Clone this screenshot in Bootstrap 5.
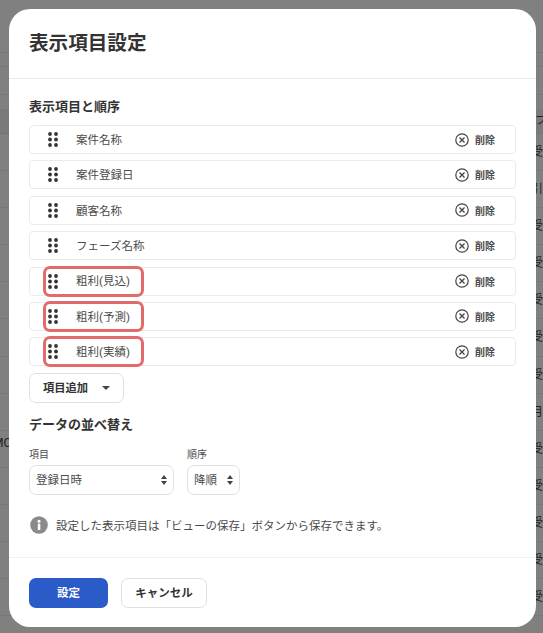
<!DOCTYPE html>
<html lang="ja"><head><meta charset="utf-8">
<link href="https://cdn.jsdelivr.net/npm/bootstrap@5.3.0/dist/css/bootstrap.min.css" rel="stylesheet">
<style>
html,body{height:633px;overflow:hidden;}
body{background:#808080;font-family:"Roboto","Noto Sans CJK JP",sans-serif;color:#333;}
.page-under{height:633px;overflow:hidden;}
.under-top{height:53px;border-bottom:1px solid #777;}
.under-a{height:14px;border-bottom:1px solid #777;}
.under-b{height:28px;border-bottom:1px solid #777;}
.under-band{height:39px;padding-top:14px;background:linear-gradient(#808080 14px,#7a7a7a 14px);border-bottom:1px solid #747474;padding-left:535px;font-size:11.5px;line-height:22px;color:#222;white-space:nowrap;}
.under-row{height:37.1px;border-bottom:1px solid #777;font-size:12px;line-height:36px;color:#222;white-space:nowrap;padding-left:531px;position:relative;}
.under-left{position:absolute;left:-7px;top:-6px;}
.under-date{height:20px;font-size:11px;line-height:20px;color:#222;padding-left:147px;white-space:nowrap;margin-top:-6px;}
.sheet{position:absolute;left:9px;top:9px;width:527px;background:#fff;border-radius:21px;height:618px;display:flex;flex-direction:column;}
.sheet-head{height:70px;padding:0 20px;border-bottom:1px solid #ebebeb;}
.sheet-title{font-size:19.6px;font-weight:700;color:#333;margin:0;line-height:1;}
.sheet-body{padding:18px 20px 0 20px;flex:1 1 auto;}
.sec-title{font-size:13px;font-weight:700;color:#333;line-height:20px;margin:0 0 8px;}
.field-row{height:29px;border:1px solid #ebebeb;border-radius:4px;margin-bottom:6.4px;font-size:11.5px;color:#4a4a4a;padding-left:18px;}
.dots{width:10px;height:15px;margin-right:18px;flex:none;display:block;}
.drop{margin-left:auto;margin-right:20px;font-size:10px;font-weight:700;color:#4a4a4a;gap:6px;}
.hl{position:relative;}
.hl::after{content:"";position:absolute;left:13px;top:-2px;width:101px;height:31px;border:3px solid #e26a6a;border-radius:7px;}
.nudge{padding-top:2px;}
.nudge-more{padding-top:3px;}
.add-btn{height:30px;border:1px solid #e0e0e0;border-radius:7px;background:#fff;font-size:11.25px;font-weight:700;color:#333;padding:0 13px;gap:14px;}
.tri{width:0;height:0;border-left:4px solid transparent;border-right:4px solid transparent;border-top:4px solid #444;}
.sec2{margin:12px 0 13px;}
.pair-gap{gap:13px;}
.lbl{font-size:10px;color:#4a4a4a;line-height:14px;margin-bottom:3px;}
.pick{height:30px;border:1px solid #e0e0e0;border-radius:7px;background:#fff;font-size:11.5px;color:#4a4a4a;padding:0 6px;}
.pick-a{width:145px;}
.pick-b{width:53px;}
.updown{margin-left:auto;flex:none;width:6px;height:10px;display:block;}
.note{font-size:11.5px;color:#4a4a4a;margin-top:21px;gap:8px;}
.note svg{margin-left:1px;}
.sheet-foot{height:70px;border-top:1px solid #f0f0f0;padding:20px 20px 0;gap:13px;}
.go-btn{width:79px;height:30px;background:#2a5bc9;border:0;border-radius:7px;color:#fff;font-size:11.5px;font-weight:700;padding:2px 0 0;}
.no-btn{width:86px;height:30px;background:#fff;border:1px solid #e0e0e0;border-radius:7px;color:#333;font-size:11.5px;font-weight:700;padding:2px 0 0;}
</style></head><body>
<div class="page-under" id="under"></div>
<div class="sheet">
 <div class="sheet-head d-flex align-items-center"><h1 class="sheet-title">表示項目設定</h1></div>
 <div class="sheet-body">
  <h2 class="sec-title">表示項目と順序</h2>
  <div id="rows"></div>
  <button class="add-btn d-inline-flex align-items-center"><span class="nudge-more">項目追加</span><span class="tri"></span></button>
  <h2 class="sec-title sec2">データの並べ替え</h2>
  <div class="d-flex pair-gap">
   <div><div class="lbl">項目</div><div class="pick pick-a d-flex align-items-center"><span class="nudge">登録日時</span><svg class="updown" viewBox="0 0 6 10"><path d="M3 0 6 4H0zM3 10 0 6h6z" fill="#444"/></svg></div></div>
   <div><div class="lbl">順序</div><div class="pick pick-b d-flex align-items-center"><span class="nudge">降順</span><svg class="updown" viewBox="0 0 6 10"><path d="M3 0 6 4H0zM3 10 0 6h6z" fill="#444"/></svg></div></div>
  </div>
  <div class="note d-flex align-items-center">
   <svg width="18" height="18" viewBox="0 0 18 18"><circle cx="9" cy="9" r="8.8" fill="#8a8a8a"/><circle cx="9" cy="5.2" r="1.5" fill="#fff"/><rect x="7.8" y="7.6" width="2.5" height="6.4" fill="#fff"/></svg>
   <span class="nudge">設定した表示項目は「ビューの保存」ボタンから保存できます。</span>
  </div>
 </div>
 <div class="sheet-foot d-flex">
  <button class="go-btn">設定</button><button class="no-btn">キャンセル</button>
 </div>
</div>
<script>
const names=["案件名称","案件登録日","顧客名称","フェーズ名称","粗利(見込)","粗利(予測)","粗利(実績)"];
const dots='<svg class="dots" viewBox="0 0 10 15">'+[2,7.5,13].map(y=>[2,8].map(x=>`<circle cx="${x}" cy="${y}" r="1.9" fill="#333"/>`).join('')).join('')+'</svg>';
const xi='<svg width="14" height="14" viewBox="0 0 14 14" fill="none" stroke="#444"><circle cx="7" cy="7" r="6.2" stroke-width="1.2"/><path d="M4.5 4.5l5 5M9.5 4.5l-5 5" stroke-width="1.3"/></svg>';
document.getElementById('rows').innerHTML=names.map((n,i)=>`<div class="field-row d-flex align-items-center ${i>3?'hl':''}">${dots}<span class="nudge">${n}</span><span class="drop d-inline-flex align-items-center">${xi}<span class="nudge">削除</span></span></div>`).join('');
const cells=["受注","引合","受注","受注","受注","受注","受注","月次","受注","受注","受注","受注","受注"];
document.getElementById('under').innerHTML='<div class="under-top"></div><div class="under-a"></div><div class="under-b"></div><div class="under-band">フェーズ</div>'+
 cells.map((c,i)=>`<div class="under-row">${i===8?'<span class="under-left">MC</span>':''}${c}</div>`).join('')+'<div class="under-date">2022-12-20（水）</div>';
</script>
<script src="https://cdn.jsdelivr.net/npm/bootstrap@5.3.0/dist/js/bootstrap.bundle.min.js"></script>
</body></html>
